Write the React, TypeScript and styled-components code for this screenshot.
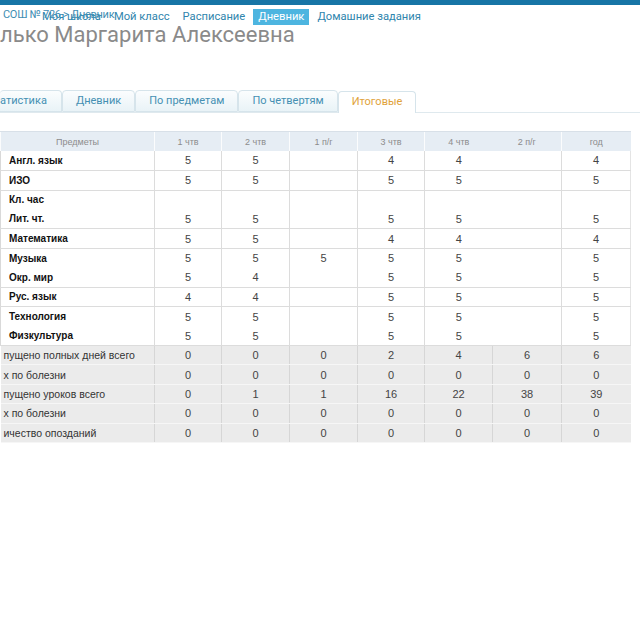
import { FC } from 'react';
import styled, { createGlobalStyle } from 'styled-components';

const GlobalStyle = createGlobalStyle`
  html, body {
    margin: 0;
    padding: 0;
    background: #fff;
    overflow: hidden;
  }
  body {
    font-family: Roboto, 'Liberation Sans', sans-serif;
  }
`;

type Row = { name: string; marks: string[]; divider?: boolean };

const SUBJECTS: Row[] = [
  { name: 'Англ. язык', marks: ['5', '5', '', '4', '4', '', '4'], divider: true },
  { name: 'ИЗО', marks: ['5', '5', '', '5', '5', '', '5'], divider: true },
  { name: 'Кл. час', marks: ['', '', '', '', '', '', ''] },
  { name: 'Лит. чт.', marks: ['5', '5', '', '5', '5', '', '5'], divider: true },
  { name: 'Математика', marks: ['5', '5', '', '4', '4', '', '4'], divider: true },
  { name: 'Музыка', marks: ['5', '5', '5', '5', '5', '', '5'] },
  { name: 'Окр. мир', marks: ['5', '4', '', '5', '5', '', '5'], divider: true },
  { name: 'Рус. язык', marks: ['4', '4', '', '5', '5', '', '5'], divider: true },
  { name: 'Технология', marks: ['5', '5', '', '5', '5', '', '5'] },
  { name: 'Физкультура', marks: ['5', '5', '', '5', '5', '', '5'], divider: true },
];

const TOTALS: Row[] = [
  { name: 'пущено полных дней всего', marks: ['0', '0', '0', '2', '4', '6', '6'] },
  { name: 'х по болезни', marks: ['0', '0', '0', '0', '0', '0', '0'] },
  { name: 'пущено уроков всего', marks: ['0', '1', '1', '16', '22', '38', '39'] },
  { name: 'х по болезни', marks: ['0', '0', '0', '0', '0', '0', '0'] },
  { name: 'ичество опозданий', marks: ['0', '0', '0', '0', '0', '0', '0'] },
];

const HEADERS = ['1 чтв', '2 чтв', '1 п/г', '3 чтв', '4 чтв', '2 п/г', 'год'];
const WIDTHS = [154, 67, 68, 68, 67, 68, 69, 69];
const NAV = ['Моя школа', 'Мой класс', 'Расписание', 'Дневник', 'Домашние задания'];
const TABS = ['атистика', 'Дневник', 'По предметам', 'По четвертям', 'Итоговые'];

const App: FC = () => (
  <>
    <GlobalStyle />
    <Page>
      <TopBar />
      <Header>
        <Crumbs>СОШ № 726 &gt; Дневник</Crumbs>
        <Nav>
          {NAV.map((item) => (
            <NavItem key={item} $active={item === 'Дневник'}>
              {item}
            </NavItem>
          ))}
        </Nav>
      </Header>
      <PupilName>лько Маргарита Алексеевна</PupilName>
      <Tabs>
        {TABS.map((tab, i) => (
          <Tab key={tab} $active={tab === 'Итоговые'} $first={i === 0}>
            {tab}
          </Tab>
        ))}
      </Tabs>
      <Grades>
        <colgroup>
          {WIDTHS.map((w, i) => (
            <col key={i} style={{ width: w }} />
          ))}
        </colgroup>
        <thead>
          <tr>
            <HeadCell>Предметы</HeadCell>
            {HEADERS.map((h, i) => (
              <HeadCell key={h} $noLeft={i === 5}>
                {h}
              </HeadCell>
            ))}
          </tr>
        </thead>
        <tbody>
          {SUBJECTS.map((row, r) => (
            <tr key={r}>
              <SubjectCell $divider={row.divider}>{row.name}</SubjectCell>
              {row.marks.map((m, i) => (
                <MarkCell key={i} $divider={row.divider} $noLeft={i === 5}>
                  {m}
                </MarkCell>
              ))}
            </tr>
          ))}
          {TOTALS.map((row, r) => (
            <tr key={`t${r}`}>
              <TotalName>{row.name}</TotalName>
              {row.marks.map((m, i) => (
                <TotalCell key={i}>{m}</TotalCell>
              ))}
            </tr>
          ))}
        </tbody>
      </Grades>
    </Page>
  </>
);

const Page = styled.div`
  width: 640px;
  height: 640px;
  background: #fff;
`;

const TopBar = styled.div`
  height: 5px;
  background: #1775a6;
`;

const Header = styled.div`
  position: relative;
  height: 20px;
  padding-top: 4px;
`;

const Crumbs = styled.div`
  position: absolute;
  left: 3px;
  top: 3px;
  font-size: 11px;
  letter-spacing: -0.3px;
  color: #3e8db2;
  white-space: nowrap;
`;

const Nav = styled.div`
  display: flex;
  align-items: center;
  gap: 3px;
  margin-left: 37px;
  height: 16px;
`;

const NavItem = styled.span<{ $active?: boolean }>`
  display: block;
  height: 16px;
  line-height: 16px;
  padding: 0 5px;
  font-size: 11.2px;
  color: ${(p) => (p.$active ? '#fff' : '#2f85ad')};
  background: ${(p) => (p.$active ? '#4db5e0' : 'transparent')};
  white-space: nowrap;
`;

const PupilName = styled.div`
  font-size: 22px;
  line-height: 24px;
  color: #8a8a8a;
  margin-top: -6px;
  white-space: nowrap;
`;

const Tabs = styled.div`
  display: flex;
  align-items: flex-end;
  margin-top: 44px;
  height: 21px;
  border-bottom: 1px solid #dfe9ee;
`;

const Tab = styled.div<{ $active?: boolean; $first?: boolean }>`
  height: ${(p) => (p.$active ? '21px' : '20px')};
  line-height: 20px;
  padding: ${(p) => (p.$first ? '0 14px 0 0' : '0 13px')};
  font-size: 11px;
  color: ${(p) => (p.$active ? '#e1a23a' : '#4590b3')};
  background: ${(p) =>
    p.$active ? '#fff' : 'linear-gradient(#fbfdfe, #e9f3f7)'};
  border: 1px solid #d6e4eb;
  border-left-width: ${(p) => (p.$first ? 0 : '1px')};
  border-bottom: ${(p) => (p.$active ? 'none' : '1px solid #d6e4eb')};
  border-radius: 4px 4px 0 0;
  margin-bottom: ${(p) => (p.$active ? '-1px' : '0')};
  white-space: nowrap;
`;

const Grades = styled.table`
  margin-top: 18px;
  width: 630px;
  table-layout: fixed;
  border-collapse: collapse;
  font-family: 'Liberation Sans', Arial, sans-serif;
`;

const HeadCell = styled.th<{ $noLeft?: boolean }>`
  height: 19px;
  padding: 0;
  font-size: 9px;
  font-weight: normal;
  color: #8c8c8c;
  background: #e6edf4;
  border-top: 1px solid #d8e0e8;
  border-left: ${(p) => (p.$noLeft ? 'none' : '1px solid #fbfcfd')};
  text-align: center;
`;

const SubjectCell = styled.td<{ $divider?: boolean }>`
  height: 18.8px;
  padding: 0 0 0 8px;
  font-size: 10px;
  font-weight: bold;
  color: #111;
  border-left: 1px solid #d9d9d9;
  border-bottom: ${(p) => (p.$divider ? '1px solid #dcdcdc' : 'none')};
  white-space: nowrap;
`;

const MarkCell = styled.td<{ $divider?: boolean; $noLeft?: boolean }>`
  padding: 0;
  font-size: 11px;
  color: #444;
  text-align: center;
  border-left: ${(p) => (p.$noLeft ? 'none' : '1px solid #dcdcdc')};
  border-bottom: ${(p) => (p.$divider ? '1px solid #dcdcdc' : 'none')};
  &:last-child {
    border-right: 1px solid #e4e4e4;
  }
`;

const TotalName = styled.td`
  height: 18.4px;
  padding: 0 0 0 3px;
  font-size: 10.5px;
  color: #333;
  background: #ebebeb;
  border-bottom: 1px solid #f6f6f6;
  white-space: nowrap;
  overflow: hidden;
`;

const TotalCell = styled.td`
  padding: 0;
  font-size: 11px;
  color: #444;
  text-align: center;
  background: #ebebeb;
  border-left: 1px solid #d6d6d6;
  border-bottom: 1px solid #f6f6f6;
`;

export default App;
